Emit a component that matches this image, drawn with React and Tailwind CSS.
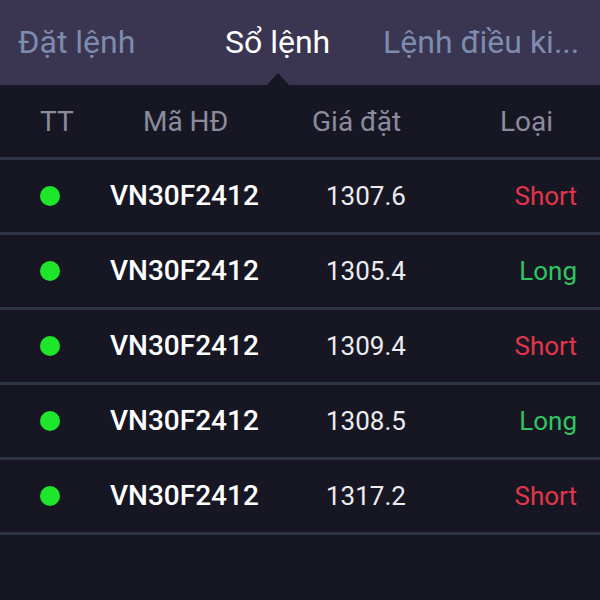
const orders = [
  { code: "VN30F2412", price: "1307.6", type: "Short" },
  { code: "VN30F2412", price: "1305.4", type: "Long" },
  { code: "VN30F2412", price: "1309.4", type: "Short" },
  { code: "VN30F2412", price: "1308.5", type: "Long" },
  { code: "VN30F2412", price: "1317.2", type: "Short" },
];

export default function App() {
  return (
    <div className="w-[600px] h-[600px] bg-[#171724] overflow-hidden font-['Roboto',sans-serif]">
      {/* tabs */}
      <div className="relative h-[85px] bg-[#3a3551] flex items-center text-[32px] leading-none">
        <div className="w-[225px] pl-[18px] text-[#7d8cae] pb-[1px]">Đặt lệnh</div>
        <div className="w-[158px] text-white pb-[1px]">Sổ lệnh</div>
        <div className="flex-1 text-[#7d8cae] pb-[1px] whitespace-nowrap">Lệnh điều ki...</div>
        <div className="absolute left-[267px] bottom-0 w-0 h-0 border-l-[11px] border-r-[11px] border-b-[12px] border-l-transparent border-r-transparent border-b-[#171724]" />
      </div>

      {/* header */}
      <div className="h-[72px] flex items-center text-[28px] leading-none text-[#8b8b9c] pt-[2px]">
        <div className="w-[110px] pl-[40px]">TT</div>
        <div className="w-[202px] pl-[33px]">Mã HĐ</div>
        <div className="w-[160px]">Giá đặt</div>
        <div className="flex-1 pl-[28px]">Loại</div>
      </div>

      <div className="border-t-[3px] border-[#2d3545]">
        {orders.map((o, i) => (
          <div key={i} className="h-[75px] flex items-center border-b-[3px] border-[#2d3545] leading-none">
            <div className="w-[110px] pl-[40px] flex">
              <span className="w-[20px] h-[20px] rounded-full bg-[#1ee62a]" />
            </div>
            <div className="w-[216px] text-[28px] text-white font-medium">{o.code}</div>
            <div className="w-[120px] text-[26px] text-[#ececf0]">{o.price}</div>
            <div className={`flex-1 text-right pr-[23px] text-[26px] ${o.type === "Short" ? "text-[#e3354a]" : "text-[#2fc561]"}`}>
              {o.type}
            </div>
          </div>
        ))}
      </div>
    </div>
  );
}
